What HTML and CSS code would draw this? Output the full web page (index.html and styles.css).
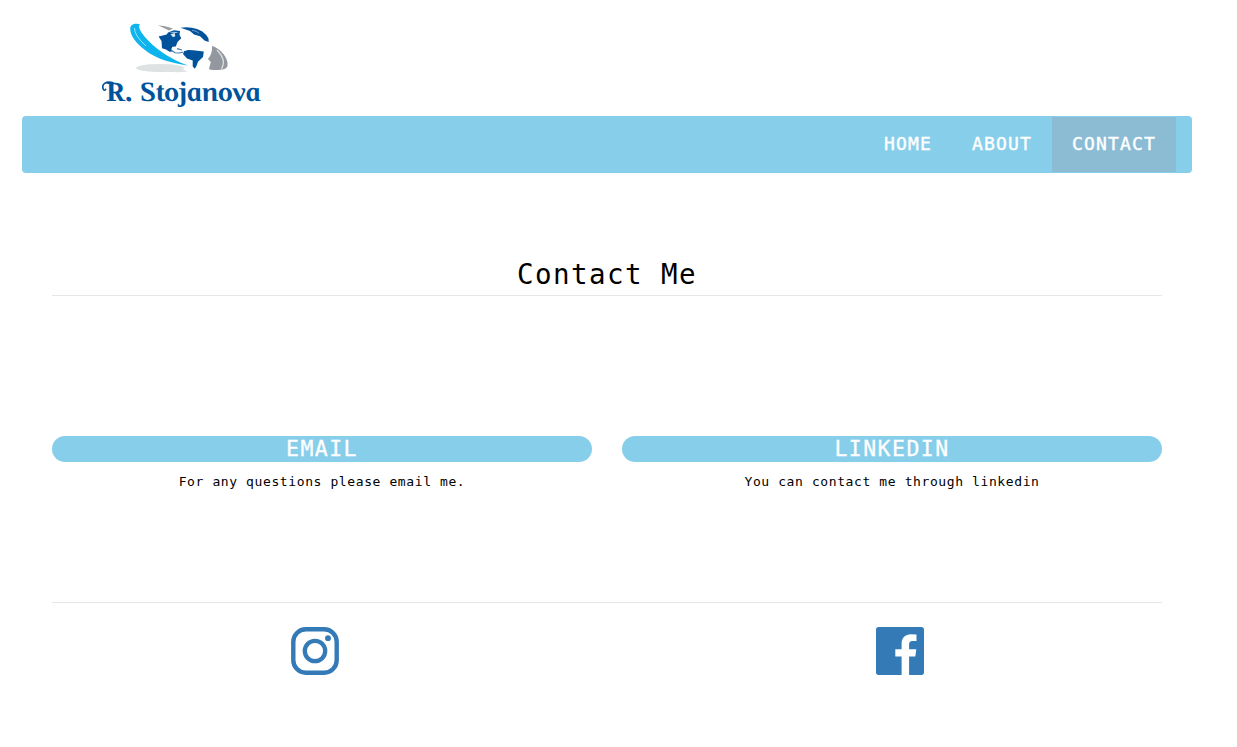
FILE: index.html
```
<!DOCTYPE html>
<html lang="en">
<head>
<meta charset="utf-8">
<title>Contact Me</title>
<link rel="stylesheet" href="styles.css">
</head>
<body>
<div class="container">
  <header class="brand">
    <svg class="logo" viewBox="90 10 190 100" role="img" aria-label="R. Stojanova">
      <ellipse cx="160" cy="68" rx="24" ry="4" fill="#dee2e2"/>
      <path d="M150 67Q174 66 188 71.5Q174 73 160 71Z" fill="#dee2e2"/>
      <path d="M158 25.2Q165 25.5 173 28.5L169 30.5Z" fill="#989da1"/>
      <path d="M130.2 29C130 23 137 23 140 24.5C136 28 147 40 154 46C164 55 178 62 188 65.5C171 63 156 59 145 50C136 43 130.5 36 130.2 29Z" fill="#0eb4ee"/>
      <path d="M134.5 28Q134 35 146 46" fill="none" stroke="#c4edfb" stroke-width=".8"/>
      <path d="M158.6 36.4L166.7 34.6L168 32.6L174 30.2L180 31L179.5 35L181.3 38.3L177.5 42L175.8 46.5L172.5 46.8L171.3 49L172.4 51.5L169.5 51.8L166 49.5L162 48.2L161.5 41Z" fill="#00539b"/>
      <path d="M170.5 34.2L174.8 33L175.3 36.2L173 37.2ZM169 32.6L174.5 31.8L179 33" fill="#d8e6f1"/>
      <path d="M180.5 27.8Q189 26.3 197 29L202 31.3Q206.5 34.5 208.5 38.5L208.7 42L204.5 40.6L200 36.3L194 34.6L190 31Z" fill="#00539b"/>
      <path d="M192 30.3L196 31.2L199 33.3" fill="none" stroke="#9fbdd8" stroke-width=".7"/>
      <path d="M171 50L175 52.8L179.5 53L183 52M177 48.6L182 50" fill="none" stroke="#3d79b0" stroke-width="1.1"/>
      <path d="M184 51.3L188 50L193.3 50.3L203.8 51.4L203 57L198 61.7L196.5 66L194.8 68.8L192.7 66.5L192.7 60.5L187 58.4L183 54Z" fill="#00539b"/>
      <path d="M212 46C221 48.5 229 59 227.5 66C226.3 70.5 217 70.3 210.5 69.7L209 68.7L210.8 62L208 59Q212.5 54 212 46Z" fill="#92989e"/>
      <path d="M217 50Q227 60 221.5 69" fill="none" stroke="#d9dde0" stroke-width="1.2"/>
      <path d="M113 82.8C106 80.5 101 84.5 103.4 89.5Q104.6 91 105.6 89.3" fill="none" stroke="#00539b" stroke-width="1.6" stroke-linecap="round"/>
      <text class="logo-text" x="107" y="101" textLength="155" lengthAdjust="spacingAndGlyphs">R. Stojanova</text>
    </svg>
  </header>
  <nav class="navbar">
    <a class="nav-link">HOME</a>
    <a class="nav-link">ABOUT</a>
    <a class="nav-link active">CONTACT</a>
  </nav>
  <main class="content">
    <h1 class="title">Contact Me</h1>
    <section class="columns">
      <div class="column">
        <h2 class="pill">EMAIL</h2>
        <p class="note">For any questions please email me.</p>
      </div>
      <div class="column">
        <h2 class="pill">LINKEDIN</h2>
        <p class="note">You can contact me through linkedin</p>
      </div>
    </section>
    <footer class="social">
      <svg class="icon" viewBox="0 0 48 48" aria-label="Instagram">
        <rect x="2.3" y="2.3" width="43.4" height="43.4" rx="12.5" fill="none" stroke="#337ab7" stroke-width="4.4"/>
        <circle cx="24" cy="24" r="10.2" fill="none" stroke="#337ab7" stroke-width="4.3"/>
        <circle cx="37" cy="11.2" r="2.9" fill="#337ab7"/>
      </svg>
      <svg class="icon" viewBox="0 0 48 48" aria-label="Facebook">
        <path fill="#337ab7" d="M2.7 0H45.3Q48 0 48 2.7V45.3Q48 48 45.3 48H33.1V29.4H39.3L40.3 22.2H33.1V17.6C33.1 15.5 33.8 14.1 36.7 14.1H40.5V7.6Q37.8 7.3 34.9 7.3C29.4 7.3 25.6 10.7 25.6 16.8V22.2H19.3V29.4H25.6V48H2.7Q0 48 0 45.3V2.7Q0 0 2.7 0Z"/>
      </svg>
    </footer>
  </main>
</div>
</body>
</html>
```
FILE: styles.css
```
* { box-sizing: border-box; }

body {
  margin: 0;
  background: #fff;
  color: #000;
  font-family: "DejaVu Sans Mono", "Liberation Mono", monospace;
}

.container {
  width: 1170px;
  margin-left: 22px;
}

.brand {
  height: 116px;
  padding: 10px 0 0 68px;
}

.logo {
  display: block;
  width: 190px;
  height: 100px;
}

.logo-text {
  font: italic bold 28px "Liberation Serif", serif;
  fill: #00539b;
  transform: skewX(11deg);
  transform-origin: 107px 101px;
}

.navbar {
  display: flex;
  justify-content: flex-end;
  height: 57px;
  padding: 1px 16px 1px 0;
  border-radius: 4px;
  background: #87ceeb;
}

.nav-link {
  padding: 0 20px;
  color: #fff;
  font-size: 18px;
  line-height: 53px;
  letter-spacing: 1.163px;
  -webkit-text-stroke: 0.4px #fff;
}

.nav-link.active { background: #8bbcd4; }

.content { padding: 0 30px; }

.title {
  height: 123px;
  margin: 0;
  padding-top: 84px;
  border-bottom: 1px solid #e7e7e7;
  font-size: 27.5px;
  font-weight: 400;
  line-height: 34px;
  letter-spacing: 1.444px;
  text-align: center;
}

.columns {
  display: grid;
  grid-template-columns: 1fr 1fr;
  gap: 30px;
  height: 307px;
  padding-top: 140px;
  border-bottom: 1px solid #e7e7e7;
  text-align: center;
}

.pill {
  height: 26px;
  margin: 0;
  border-radius: 13px;
  background: #87ceeb;
  color: #fff;
  font-size: 21.5px;
  font-weight: 400;
  line-height: 26px;
  letter-spacing: 1.457px;
  -webkit-text-stroke: 0.3px #fff;
}

.note {
  margin: 10px 0 0;
  font-size: 13px;
  line-height: 20px;
  letter-spacing: 0.603px;
}

.social {
  display: flex;
  gap: 537px;
  padding: 24px 0 0 238.5px;
}

.icon {
  width: 48px;
  height: 48px;
}
```
